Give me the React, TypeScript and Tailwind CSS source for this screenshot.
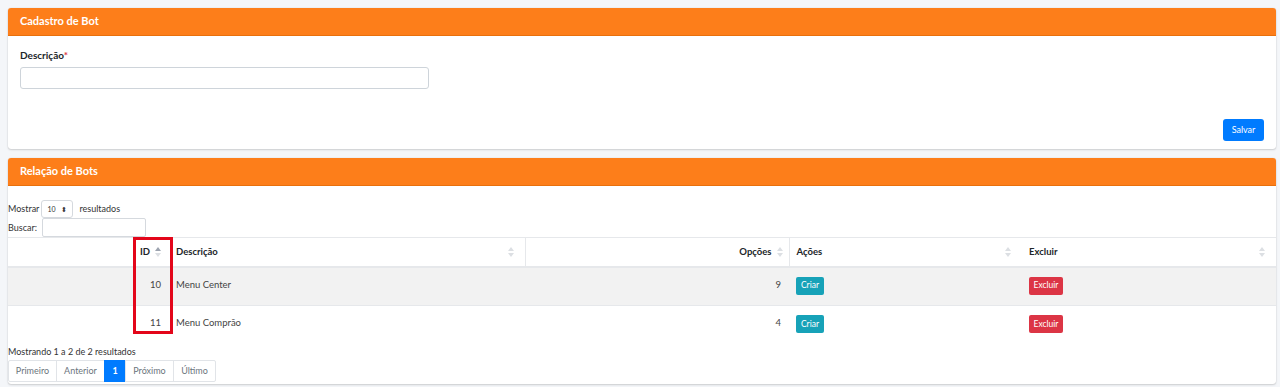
const font = { fontFamily: 'Lato, "Noto Sans", sans-serif' }

const SortIcon = ({ active }: { active?: boolean }) => (
  <svg width="6" height="10" viewBox="0 0 6 10" className="absolute top-1/2 -translate-y-1/2">
    <path d="M3 0 L6 4 L0 4 Z" fill={active ? '#9ca3af' : '#dcdfe3'} />
    <path d="M3 10 L6 6 L0 6 Z" fill="#dcdfe3" />
  </svg>
)

const rows = [
  { id: 10, descricao: 'Menu Center', opcoes: 9 },
  { id: 11, descricao: 'Menu Comprão', opcoes: 4 },
]

const pages = [
  { label: 'Primeiro', w: 'w-[49px]' },
  { label: 'Anterior', w: 'w-[49px]' },
  { label: '1', w: 'w-[22px]' },
  { label: 'Próximo', w: 'w-[49px]' },
  { label: 'Último', w: 'w-[43px]' },
]

export default function App() {
  return (
    <div className="min-h-screen bg-[#f4f6f9] pl-2 pr-[4px] pt-2 pb-[3px] text-[#212529]" style={font}>
      {/* Cadastro */}
      <div className="mb-[9px] rounded-[3px] bg-white shadow-[0_0_1px_rgba(0,0,0,0.2),0_1px_2px_rgba(0,0,0,0.15)]">
        <div className="flex h-[28px] items-center rounded-t-[3px] border-b border-[#e8700c] bg-[#fd7e1a] px-3 text-[11px] font-bold text-white">
          Cadastro de Bot
        </div>
        <div className="px-3 pt-[13px] pb-[8px]">
          <label className="block text-[10px] font-bold leading-[12px]">
            Descrição<span className="text-[#dc3545]">*</span>
          </label>
          <input className="mt-[6px] block h-[22px] w-[409px] rounded-[3px] border border-[#ced4da] bg-white" />
          <div className="mt-[30px] flex justify-end">
            <button className="h-[22px] w-[41px] rounded-[3px] bg-[#007bff] text-[9px] text-white">Salvar</button>
          </div>
        </div>
      </div>

      {/* Relação */}
      <div className="rounded-[3px] bg-white shadow-[0_0_1px_rgba(0,0,0,0.2),0_1px_2px_rgba(0,0,0,0.15)]">
        <div className="flex h-[28px] items-center rounded-t-[3px] border-b border-[#e8700c] bg-[#fd7e1a] px-3 text-[11px] font-bold text-white">
          Relação de Bots
        </div>
        <div className="pt-[14px]">
          <div className="flex h-[18px] items-center text-[9px] text-[#333]">
            <span>Mostrar</span>
            <div className="ml-[2px] flex h-[18px] w-[32px] items-center justify-between rounded-[3px] border border-[#d5d9de] px-[5px] text-[7px]">
              <span>10</span>
              <span className="text-[7px]">⬍</span>
            </div>
            <span className="ml-[6px]">resultados</span>
          </div>
          <div className="flex h-[19px] items-center text-[9px] text-[#333]">
            <span>Buscar:</span>
            <input className="ml-[5px] h-[19px] w-[104px] rounded-[2px] border border-[#d5d9de] bg-white" />
          </div>

          <div className="relative">
            <table className="w-full table-fixed border-collapse text-[9.5px]">
              <colgroup>
                <col className="w-[164px]" />
                <col className="w-[353px]" />
                <col className="w-[264px]" />
                <col className="w-[233px]" />
                <col />
              </colgroup>
              <thead>
                <tr className="h-[29px] border-t border-b-2 border-[#e6e8eb] text-[9.5px] font-bold">
                  <th className="relative pr-[22px] text-right">
                    ID
                    <span className="absolute top-0 right-[17px] h-full"><SortIcon active /></span>
                  </th>
                  <th className="relative pl-[4px] text-left">
                    Descrição
                    <span className="absolute top-0 right-[17px] h-full"><SortIcon /></span>
                  </th>
                  <th className="relative border-l border-[#e6e8eb] pr-[17px] text-right">
                    Opções
                    <span className="absolute top-0 right-[12px] h-full"><SortIcon /></span>
                  </th>
                  <th className="relative border-l border-[#e6e8eb] pl-[7px] text-left">
                    Ações
                    <span className="absolute top-0 right-[17px] h-full"><SortIcon /></span>
                  </th>
                  <th className="relative pl-[7px] text-left">
                    Excluir
                    <span className="absolute top-0 right-[17px] h-full"><SortIcon /></span>
                  </th>
                </tr>
              </thead>
              <tbody className="text-[#444]">
                {rows.map((r, i) => (
                  <tr key={r.id} className={i === 0 ? 'h-[39px] border-b border-[#e6e8eb] bg-[#f2f2f2]' : 'h-[38px] bg-white'}>
                    <td className="pr-[11px] pb-[3px] text-right">{r.id}</td>
                    <td className="pl-[4px] pb-[3px]">{r.descricao}</td>
                    <td className="pr-[8px] pb-[3px] text-right">{r.opcoes}</td>
                    <td className="pl-[7px] pb-[1px]">
                      <button className="h-[18px] w-[28px] rounded-[2px] bg-[#17a2b8] text-[8.5px] text-white">Criar</button>
                    </td>
                    <td className="pl-[7px] pb-[1px]">
                      <button className="h-[18px] w-[34px] rounded-[2px] bg-[#dc3545] text-[8.5px] text-white">Excluir</button>
                    </td>
                  </tr>
                ))}
              </tbody>
            </table>
            <div className="pointer-events-none absolute top-0 left-[125px] h-[97px] w-[40px] border-[3px] border-[#e3061a]" />
          </div>

          <div className="mt-[2px] text-[9px] leading-[12px] text-[#333]">Mostrando 1 a 2 de 2 resultados</div>
          <div className="mt-[2px] flex pb-[2px] text-[9px]">
            {pages.map((p, i) => (
              <div
                key={p.label}
                className={
                  p.label === '1'
                    ? `flex h-[22px] ${p.w} -ml-px items-center justify-center border border-[#007bff] bg-[#007bff] font-bold text-white`
                    : `flex h-[22px] ${p.w} items-center justify-center border border-[#e1e4e8] text-[#6c757d] ${i === 0 ? 'rounded-l-[2px]' : '-ml-px'} ${i === pages.length - 1 ? 'rounded-r-[2px]' : ''}`
                }
              >
                {p.label}
              </div>
            ))}
          </div>
        </div>
      </div>
    </div>
  )
}
